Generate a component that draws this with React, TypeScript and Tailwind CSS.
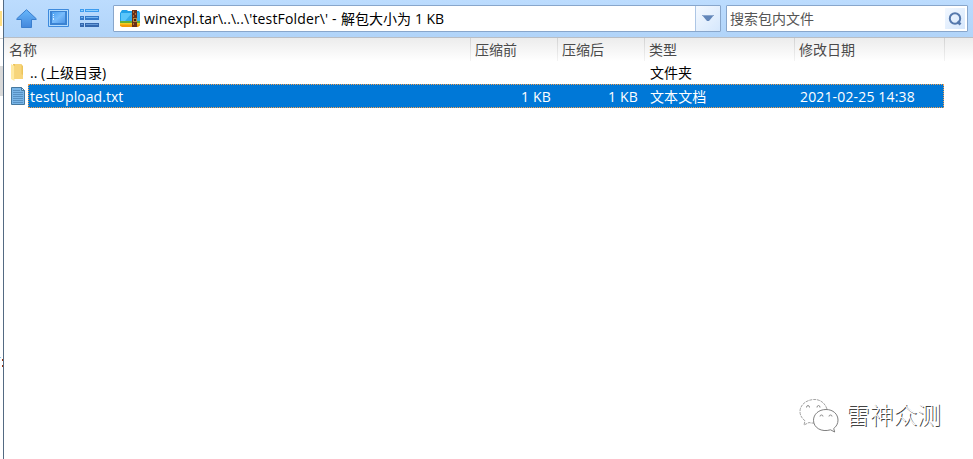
import React from 'react';

const columns = [
  { label: '名称', width: 'w-[467px]', pad: 'pl-[5px]' },
  { label: '压缩前', width: 'w-[87px]', pad: 'pl-[4px]' },
  { label: '压缩后', width: 'w-[87px]', pad: 'pl-[4px]' },
  { label: '类型', width: 'w-[150px]', pad: 'pl-[4px]' },
  { label: '修改日期', width: 'w-[150px]', pad: 'pl-[4px]' },
];

function UpIcon() {
  return (
    <svg className="ml-[12px] shrink-0" width="22" height="20" viewBox="0 0 22 20">
      <defs>
        <linearGradient id="up" x1="0" y1="0" x2="0" y2="1">
          <stop offset="0" stopColor="#68b7fb" />
          <stop offset="1" stopColor="#4387dc" />
        </linearGradient>
      </defs>
      <path d="M10.5 .7 20.2 9.7V10.5H15.5V18.5H5.5V10.5H.8V9.7Z" fill="url(#up)" stroke="#3b7fce" />
    </svg>
  );
}

function WindowIcon() {
  return (
    <svg className="ml-[10px] shrink-0" width="21" height="20" viewBox="0 0 21 20">
      <defs>
        <linearGradient id="win" x1="0" y1="0" x2="1" y2="1">
          <stop offset="0" stopColor="#4a9ff0" />
          <stop offset=".5" stopColor="#79bcfb" />
          <stop offset="1" stopColor="#4f96e6" />
        </linearGradient>
      </defs>
      <path d="M.5 .5H20.5V17.5H.5Z" fill="#b2dbfd" stroke="#3d8add" />
      <path d="M2 2H19V16H2Z" fill="#3b83d3" />
      <path d="M4 3H17V14H4Z" fill="url(#win)" />
      <path d="M5 5h1v1H5zM5 7h1v1H5zM5 9h1v2H5z" fill="#d5ecff" />
    </svg>
  );
}

function ListIcon() {
  return (
    <svg className="ml-[11px] shrink-0" width="19" height="20" viewBox="0 0 19 20">
      {[
        [0, '#3c9cef', '#8fcffd', 3],
        [7, '#3379c9', '#72b3ef', 4],
        [14, '#3467ae', '#6498d7', 4],
      ].map(([y, stroke, fill, h]) => (
        <g key={y} transform={`translate(0 ${y})`}>
          <path d={`M0 0H4V${h}H0ZM5 0H19V${h}H5Z`} fill={stroke as string} />
          <path d="M1 1H3V2H1ZM6 1H18V2H6Z" fill={fill as string} />
        </g>
      ))}
    </svg>
  );
}

function ArchiveIcon() {
  return (
    <svg className="ml-[6px] shrink-0" width="20" height="20" viewBox="0 0 20 20">
      <path d="M0 14.5H20V16.5L18 18H2L0 17Z" fill="#f39a08" />
      <path d="M0 13.5H20V15.5H0Z" fill="#f5ce24" />
      <path d="M0 12H20V14H0Z" fill="#66ae36" />
      <path d="M0 4 2 1H7L8 2H19L20 4V12H0Z" fill="#21a0e8" />
      <path d="M1 4H20V12H1Z" fill="#5bc6fa" />
      <path d="M5 12 12 4H20V12Z" fill="#35abea" />
      <path d="M12 1H17V18H12Z" fill="#68301b" />
      <path d="M13 2h1v2h-1zM15 4h1v2h-1zM13 6h1v2h-1zM13 14h1v2h-1z" fill="#b77335" />
      <path d="M13 9H17V13H13Z" fill="#bc8738" />
      <path d="M14 10H16V12H14Z" fill="#3f2113" />
    </svg>
  );
}

function FolderIcon() {
  return (
    <svg className="ml-[7px] shrink-0" width="13" height="18" viewBox="0 0 13 18">
      <path d="M2 0H10L12 2V15H3Z" fill="#edc45a" />
      <path d="M4 0H10.5V10L12 11V15H4Z" fill="#f7d57b" />
      <path d="M0 0 3.5 2V17L0 15Z" fill="#ffe9a1" />
    </svg>
  );
}

function TextIcon() {
  return (
    <svg className="ml-[7px] shrink-0" width="15" height="20" viewBox="0 0 15 20">
      <path d="M.5 1.5H10.5L13.5 4.5V18.5H.5Z" fill="#79b6e8" stroke="#45789f" />
      <path d="M10.5 1.5V4.5H13.5Z" fill="#c1e3fb" stroke="#45789f" />
      <path d="M2 4.5H9M2 6.5H12M2 8.5H12M2 10.5H12M2 12.5H12M2 14.5H12M2 16.5H12" stroke="#5790c2" />
    </svg>
  );
}

function ChatLogo() {
  return (
    <svg className="shrink-0" width="42" height="38" viewBox="0 0 42 38">
      <g fill="#fff" strokeWidth=".9">
        <path d="M28 11C26 5 21 1 14.5 1.5 7 2 1 7 1 13.5c0 4 2 7 5 9.3L5 27l5-2.5c2 .6 4 .8 6 .5" stroke="#9a9a9a" strokeDasharray="3 .8" />
        <path d="M27 11.5c7.2 0 12 4.7 12 10.6 0 3.5-1.6 6.4-4.3 8.4l1 3.5-4.2-2.2c-9 2.7-17-2-17-9.5 0-6 5.2-10.8 12.5-10.8Z" stroke="#707070" />
      </g>
      <path d="M7.500 9.500q0-2 1.500-2t1.500 2M18 9.500q0-2 1.500-2t1.500 2M21 18.500q0-1.500 1.500-1.500t1.500 1.500M30 18.500q0-1.500 1.500-1.500t1.500 1.500" fill="none" stroke="#808080" strokeWidth=".9" />
    </svg>
  );
}

export default function App() {
  return (
    <div className="flex h-[459px] w-[973px] overflow-hidden bg-white font-['Open_Sans','Noto_Sans_CJK_SC',sans-serif] text-[14px] leading-[20px] text-black">
      <div className="flex w-[4px] shrink-0 flex-col border-r border-[#536a82] bg-white">
        <div className="mt-[11px] h-[15px] w-[2px] bg-[#ffdf83]" />
        <div className="mt-[12px] h-px bg-[#cfcfcf]" />
        <div className="mt-[27px] h-[30px] bg-[#d9d9d9]" />
        <div className="mt-[261px] h-px w-px bg-[#8dc5e8]" />
        <div className="ml-[2px] mt-px h-[2px] w-px bg-[#9b3510]" />
        <div className="ml-[2px] mt-[4px] h-[2px] w-px bg-[#9b3510]" />
      </div>

      <main className="flex min-w-0 flex-1 flex-col">
        <div className="flex h-[38px] shrink-0 items-center border-b border-[#b9bec5] bg-[linear-gradient(#bcdcfe,#b1d4f9)]">
          <UpIcon />
          <WindowIcon />
          <ListIcon />
          <div className="ml-[14px] flex h-[27px] w-[608px] shrink-0 items-center rounded-[1px] border border-[#88a6cb] bg-white">
            <ArchiveIcon />
            <div className="ml-[4px] flex min-w-0 flex-1 items-center whitespace-pre">
              <span className="w-[197px] tracking-[0.15px]">{"winexpl.tar\\..\\..\\'testFolder\\' - "}</span>
              <span>解包大小为</span>
              <span className="ml-[4px] tracking-[-0.05px]">1 KB</span>
            </div>
            <div className="flex h-full w-[25px] items-center justify-center border-l border-[#adc6e5] bg-[linear-gradient(135deg,#f4f9ff,#d5e7fc)]">
              <svg width="12" height="7" viewBox="0 0 12 7">
                <path d="M0 0H12L7 6H5Z" fill="#6286b9" />
                <path d="M0 .5H12" stroke="#8ba7ce" />
              </svg>
            </div>
          </div>
          <div className="ml-[5px] flex h-[27px] w-[242px] shrink-0 items-center justify-between rounded-[1px] border border-[#88a6cb] bg-white pl-[3px] pr-[2px] text-[#555]">
            <span className="text-[14px]">搜索包内文件</span>
            <span className="flex h-[21px] w-[20px] items-center justify-center bg-[linear-gradient(135deg,#f2f8ff,#d6e7fc)]">
              <svg width="14" height="14" viewBox="0 0 14 14" fill="none" stroke="#5679ad" strokeWidth="2">
                <circle cx="7" cy="6.5" r="5.2" />
                <path d="m9.500 9.500 3 3" strokeWidth="2.6" />
              </svg>
            </span>
          </div>
        </div>

        <div className="flex h-[23px] shrink-0 bg-[linear-gradient(#ececec,#fff)] text-[#4a4a4a]">
          {columns.map((column) => (
            <div key={column.label} className={`flex h-full shrink-0 items-center ${column.width} ${column.pad}`}>
              <span className="flex-1">{column.label}</span>
              <span className="h-full w-px bg-[linear-gradient(#d2d2d2,#f3f3f3)]" />
            </div>
          ))}
        </div>

        <div className="flex h-[23px] shrink-0 items-center">
          <FolderIcon />
          <div className="flex w-[626px] whitespace-pre pl-[6px]">
            <span className="w-[11px]">..</span>
            <span className="w-[5px]">(</span>
            <span>上级目录</span>
            <span>)</span>
          </div>
          <span>文件夹</span>
        </div>

        <div className="flex h-[24px] shrink-0 items-center">
          <TextIcon />
          <div className="ml-[2px] flex h-full w-[916px] items-center border border-dotted border-[#f5a04e] bg-[#0078d7] pt-[2px] text-white">
            <span className="w-[435px] pl-px tracking-[0.06px]">testUpload.txt</span>
            <span className="w-[87px] text-right tracking-[0.2px]">1 KB</span>
            <span className="w-[87px] text-right tracking-[0.2px]">1 KB</span>
            <span className="w-[162px] pl-[12px] tracking-[0.1px]">文本文档</span>
            <span className="tracking-[0.15px]">2021-02-25 14:38</span>
          </div>
        </div>

        <div className="ml-[795px] mt-[288px] flex h-[42px] items-center whitespace-nowrap">
          <ChatLogo />
          <span className="-mt-[6px] ml-[5px] font-['Noto_Sans_CJK_SC',sans-serif] text-[23.7px] font-light leading-[34px] text-white [text-shadow:1px_1px_0_#444]">雷神众测</span>
        </div>
      </main>
    </div>
  );
}
